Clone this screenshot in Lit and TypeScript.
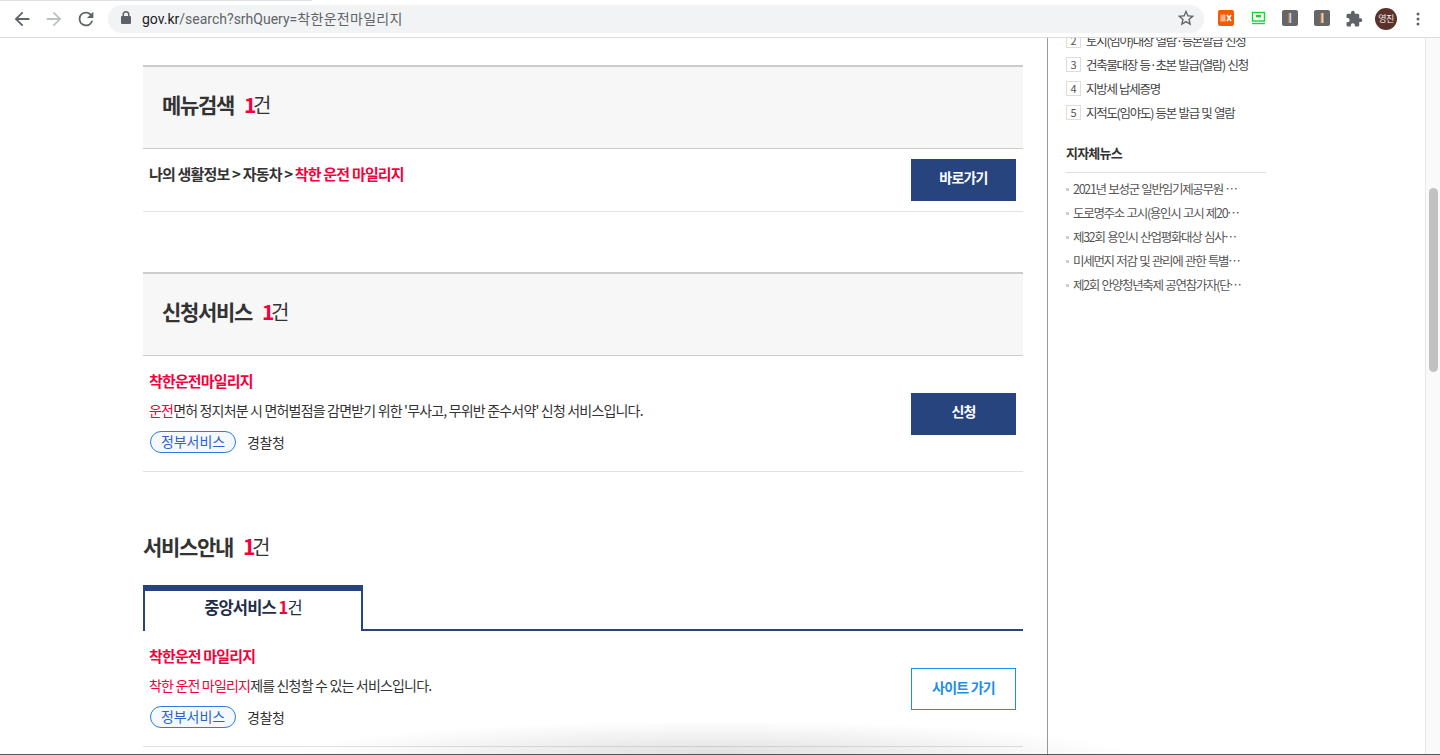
import { LitElement, html, css, svg } from "lit";
import { customElement } from "lit/decorators.js";

@customElement("app-root")
export class AppRoot extends LitElement {
  static styles = css`
    :host { display: block; position: relative; width: 1440px; height: 755px; overflow: hidden; background: #fff; font-family: "Noto Sans CJK KR", "Noto Sans", sans-serif; color: #333; letter-spacing: -0.8px; }
    .toolbar { height: 37px; border-bottom: 1px solid #dadce0; background: #fff; display: flex; align-items: center; padding: 0 0 0 11px; letter-spacing: 0; position: relative; }
    .topline { position: absolute; left: 0; top: 0; width: 312px; height: 1px; background: #dee1e6; }
    .nav { width: 22px; height: 22px; display: block; }
    .navs { display: flex; gap: 10px; width: 89px; }
    .omni { width: 1096px; height: 28px; margin-left: 8px; border-radius: 14px; background: #f1f3f4; display: flex; align-items: center; padding: 0 8px 1px 12px; box-sizing: border-box; font: 14px Roboto, "Noto Sans CJK KR", sans-serif; color: #5f6368; }
    .omni b { font-weight: 400; color: #202124; }
    .omni i { font-style: normal; letter-spacing: 0.3px; }
    .lock { margin-right: 10px; }
    .star { margin-left: auto; }
    .exts { display: flex; align-items: center; margin-left: 12px; width: 222px; height: 24px; position: relative; }
    .ext { position: absolute; top: 3px; }
    .avatar { position: absolute; left: 159px; top: 1px; width: 22px; height: 22px; border-radius: 50%; background: #5a3229; color: #eee; font-size: 9px; line-height: 22px; text-align: center; letter-spacing: -0.5px; }
    .body { display: flex; height: 717px; overflow: hidden; }
    main { width: 880px; margin-left: 143px; padding-top: 27px; flex: none; }
    .panel { background: #f7f7f7; border-top: 2px solid #ccc; border-bottom: 1px solid #ccc; display: flex; align-items: center; padding: 0 0 7px 19px; height: 74px; font-size: 21px; font-weight: 700; color: #333; letter-spacing: -1.3px; }
    .count { color: #f5003c; margin-left: 10px; font-weight: 700; letter-spacing: -3.4px; }
    .unit { font-weight: 400; font-size: 20px; letter-spacing: -1px; }
    .row { position: relative; border-bottom: 1px solid #e2e2e2; padding-left: 6px; box-sizing: border-box; }
    .menu-row { height: 63px; padding-top: 14px; font-size: 15px; font-weight: 700; line-height: 22px; margin-bottom: 60px; color: #333; letter-spacing: -0.82px; }
    .red { color: #f5003c; }
    .svc { height: 116px; padding-top: 14px; }
    .title { font-size: 15px; font-weight: 700; color: #f5003c; line-height: 22px; letter-spacing: -0.85px; }
    .desc { font-size: 14px; line-height: 20px; margin-top: 8px; color: #333; letter-spacing: -0.82px; }
    .meta { display: flex; align-items: center; margin-top: 11px; padding-left: 1px; font-size: 14px; letter-spacing: -0.4px; }
    .chip { width: 86px; height: 22px; box-sizing: border-box; border: 1px solid #2a7de1; border-radius: 11px; background: #f5f9ff; color: #2d63c8; font-size: 14px; line-height: 19px; text-align: center; letter-spacing: -0.1px; margin-right: 11px; }
    .btn { position: absolute; right: 7px; width: 105px; height: 42px; display: flex; align-items: center; justify-content: center; box-sizing: border-box; padding-bottom: 6px; background: #27447f; color: #fff; font-size: 14px; font-weight: 700; letter-spacing: -0.8px; }
    .menu-row .btn { top: 10px; }
    .svc .btn { top: 37px; }
    .ghost.btn { background: #fff; border: 1px solid #1a8fe8; color: #1a8fe8; padding-bottom: 4px; }
    .h2 { font-size: 21px; font-weight: 700; line-height: 30px; height: 30px; margin-top: 59px; color: #333; letter-spacing: -1.3px; }
    .tabs { height: 46px; margin-top: 24px; border-bottom: 2px solid #27447f; box-sizing: border-box; }
    .tab { width: 220px; height: 46px; box-sizing: border-box; border: 2px solid #27447f; border-top-width: 6px; border-bottom: 0; background: #fff; text-align: center; font-size: 16.5px; font-weight: 700; line-height: 32px; color: #1f2f4a; letter-spacing: -0.9px; }
    .tab i { font-style: normal; color: #f5003c; }
    .tab span { font-weight: 400; }
    .divider { width: 1px; margin-left: 24px; background: #999; flex: none; }
    aside { width: 200px; margin-left: 18px; flex: none; font-size: 12.5px; letter-spacing: -1.3px; word-spacing: 1px; color: #555; }
    .rank { margin-top: -10px; }
    .rank div { height: 24px; display: flex; align-items: center; color: #444; }
    .rank em { font-style: normal; width: 15px; height: 15px; box-sizing: border-box; border: 1px solid #ddd; font-size: 11px; line-height: 13px; text-align: center; margin-right: 5px; color: #555; letter-spacing: 0; }
    .news-h { font-size: 13px; font-weight: 700; color: #333; margin-top: 17px; height: 31px; line-height: 24px; border-bottom: 1px solid #ddd; letter-spacing: -0.8px; }
    .news { margin-top: 4px; }
    .news div { height: 24px; line-height: 24px; padding-left: 7px; position: relative; color: #555; white-space: nowrap; }
    .news div::before { content: ""; position: absolute; left: 0; top: 11px; width: 3px; height: 3px; background: #ccc; }
    .sb { position: absolute; right: 0; top: 38px; width: 15px; height: 717px; background: #fafafa; border-left: 1px solid #e8e8e8; box-sizing: border-box; }
    .thumb { position: absolute; left: 3px; top: 150px; width: 9px; height: 184px; border-radius: 5px; background: #c1c1c1; }
    .shade { position: absolute; left: 295px; right: 305px; bottom: 0; height: 34px; background: radial-gradient(ellipse 50% 100% at 50% 100%, rgba(0,0,0,0.12), rgba(0,0,0,0)); pointer-events: none; }
    .edge { position: absolute; left: 0; right: 0; bottom: 0; height: 1px; background: #555; }
  `;

  private ext(x: number, bg: string, body: unknown) {
    return html`<svg class="ext" style="left:${x}px" width="16" height="16" viewBox="0 0 16 16"><rect width="16" height="16" rx="2" fill="${bg}"></rect>${body}</svg>`;
  }

  render() {
    return html`
      <div class="toolbar">
        <div class="topline"></div>
        <div class="navs">
          <svg class="nav" viewBox="0 0 24 24"><path d="M20 11H7.83l5.59-5.59L12 4l-8 8 8 8 1.41-1.41L7.83 13H20z" fill="#5f6368"/></svg>
          <svg class="nav" viewBox="0 0 24 24"><path d="M4 11h12.17l-5.59-5.59L12 4l8 8-8 8-1.41-1.41L16.17 13H4z" fill="#bdc1c6"/></svg>
          <svg class="nav" viewBox="0 0 24 24"><path d="M17.65 6.35A7.96 7.96 0 0 0 12 4a8 8 0 1 0 7.73 10h-2.08A6 6 0 1 1 12 6c1.66 0 3.14.69 4.22 1.78L13 11h7V4z" fill="#5f6368"/></svg>
        </div>
        <div class="omni">
          <svg class="lock" width="12" height="14" viewBox="0 0 12 14"><path d="M10 5H9.5V3.5a3.5 3.5 0 0 0-7 0V5H2a1 1 0 0 0-1 1v6a1 1 0 0 0 1 1h8a1 1 0 0 0 1-1V6a1 1 0 0 0-1-1zM4 3.5a2 2 0 0 1 4 0V5H4z" fill="#5f6368"/></svg>
          <span><b>gov.kr</b>/search?srhQuery=<i>착한운전마일리지</i></span>
          <svg class="star" width="20" height="20" viewBox="0 0 24 24"><path d="M22 9.24l-7.19-.62L12 2 9.19 8.63 2 9.24l5.46 4.73L5.82 21 12 17.27 18.18 21l-1.63-7.03L22 9.24zM12 15.4l-3.76 2.27 1-4.28-3.32-2.88 4.38-.38L12 6.1l1.71 4.04 4.38.38-3.32 2.88 1 4.28L12 15.4z" fill="#5f6368"/></svg>
        </div>
        <div class="exts">
          ${this.ext(2, "#f25c05", svg`<rect x="2.5" y="4.5" width="5" height="7" fill="#f7b48c"/><path d="M9 5l4 6M13 5l-4 6" stroke="#fff" stroke-width="1.6"/>`)}
          <svg class="ext" style="left:35px" width="16" height="16" viewBox="0 0 16 16"><rect x="1.5" y="2.5" width="12" height="8.5" fill="none" stroke="#12d63a" stroke-width="1.4"/><rect x="5" y="4.8" width="5" height="2.6" fill="#12d63a"/><path d="M1 13.5h13" stroke="#12d63a" stroke-width="1.4"/></svg>
          ${this.ext(66, "#666", svg`<rect x="6.6" y="3" width="1.1" height="10" fill="#e8873c"/><rect x="7.7" y="3" width="1.1" height="10" fill="#fff"/><rect x="8.8" y="3" width="1" height="10" fill="#5c88d8"/>`)}
          ${this.ext(98, "#666", svg`<rect x="6.6" y="3" width="1.1" height="10" fill="#e8873c"/><rect x="7.7" y="3" width="1.1" height="10" fill="#fff"/><rect x="8.8" y="3" width="1" height="10" fill="#d8a05c"/>`)}
          <svg class="ext" style="left:129px" width="18" height="18" viewBox="0 0 24 24"><path d="M20.5 11H19V7a2 2 0 0 0-2-2h-4V3.5a2.5 2.5 0 0 0-5 0V5H4a2 2 0 0 0-2 2v3.8h1.5a2.7 2.7 0 0 1 0 5.4H2V20a2 2 0 0 0 2 2h3.8v-1.5a2.7 2.7 0 0 1 5.4 0V22H17a2 2 0 0 0 2-2v-4h1.5a2.5 2.5 0 0 0 0-5z" fill="#5f6368"/></svg>
          <div class="avatar">영진</div>
          <svg class="ext" style="left:194px;top:4px" width="16" height="16" viewBox="0 0 16 16"><circle cx="8" cy="3" r="1.5" fill="#5f6368"/><circle cx="8" cy="8" r="1.5" fill="#5f6368"/><circle cx="8" cy="13" r="1.5" fill="#5f6368"/></svg>
        </div>
      </div>
      <div class="body">
        <main>
          <div class="panel">메뉴검색<span class="count">1</span><span class="unit">건</span></div>
          <div class="row menu-row">나의 생활정보 &gt; 자동차 &gt; <span class="red">착한 운전 마일리지</span><a class="btn">바로가기</a></div>
          <div class="panel">신청서비스<span class="count">1</span><span class="unit">건</span></div>
          <div class="row svc">
            <div class="title">착한운전마일리지</div>
            <div class="desc"><span class="red">운전</span>면허 정지처분 시 면허벌점을 감면받기 위한 '무사고, 무위반 준수서약' 신청 서비스입니다.</div>
            <div class="meta"><span class="chip">정부서비스</span>경찰청</div>
            <a class="btn">신청</a>
          </div>
          <div class="h2">서비스안내<span class="count">1</span><span class="unit">건</span></div>
          <div class="tabs"><div class="tab">중앙서비스 <i>1</i><span>건</span></div></div>
          <div class="row svc">
            <div class="title">착한운전 마일리지</div>
            <div class="desc"><span class="red">착한 운전 마일리지</span>제를 신청할 수 있는 서비스입니다.</div>
            <div class="meta"><span class="chip">정부서비스</span>경찰청</div>
            <a class="btn ghost">사이트 가기</a>
          </div>
        </main>
        <div class="divider"></div>
        <aside>
          <div class="rank">
            <div><em>2</em>토지(임야)대장 열람·등본발급 신청</div>
            <div><em>3</em>건축물대장 등·초본 발급(열람) 신청</div>
            <div><em>4</em>지방세 납세증명</div>
            <div><em>5</em>지적도(임야도) 등본 발급 및 열람</div>
          </div>
          <div class="news-h">지자체뉴스</div>
          <div class="news">
            <div>2021년 보성군 일반임기제공무원 ⋯</div>
            <div>도로명주소 고시(용인시 고시 제20⋯</div>
            <div>제32회 용인시 산업평화대상 심사⋯</div>
            <div>미세먼지 저감 및 관리에 관한 특별⋯</div>
            <div>제2회 안양청년축제 공연참가자(단⋯</div>
          </div>
        </aside>
      </div>
      <div class="sb"><div class="thumb"></div></div>
      <div class="shade"></div>
      <div class="edge"></div>
    `;
  }
}
